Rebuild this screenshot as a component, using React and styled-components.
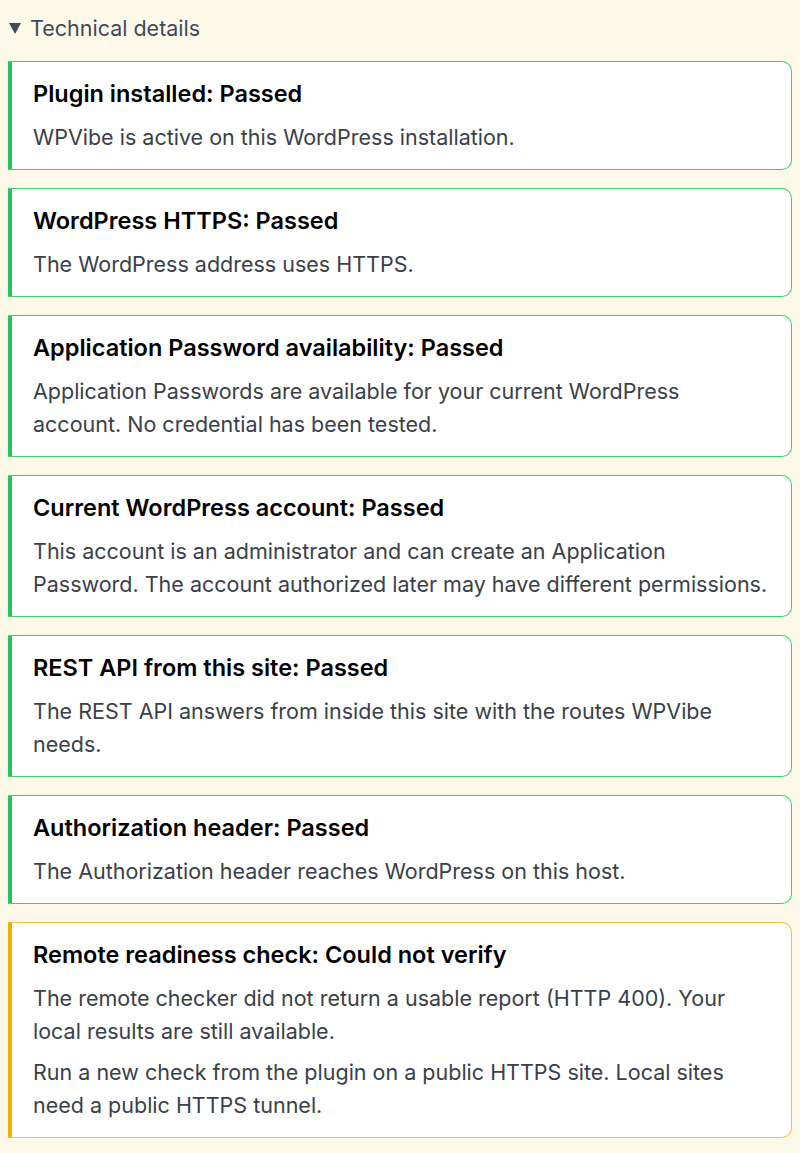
import React from "react";
import styled, { createGlobalStyle } from "styled-components";

const Global = createGlobalStyle`
  html, body { background: #fdf9e9; }
  body {
    margin: 8px;
    font-family: Inter, "Noto Sans", "Liberation Sans", sans-serif;
    -webkit-font-smoothing: antialiased;
  }
`;

const Details = styled.details`
  margin: 0;
`;

const Summary = styled.summary`
  list-style: none;
  cursor: pointer;
  display: flex;
  align-items: center;
  gap: 9px;
  font-size: 21.5px;
  line-height: 38px;
  color: #3f4a5c;
  margin-top: 1px;
  margin-bottom: 14px;
  &::-webkit-details-marker { display: none; }
`;

const Caret = styled.span`
  display: inline-block;
  width: 0;
  height: 0;
  margin-left: 1px;
  border-left: 6px solid transparent;
  border-right: 6px solid transparent;
  border-top: 11px solid #3f4a5c;
`;

const List = styled.div`
  display: flex;
  flex-direction: column;
  gap: 18px;
`;

const colors = {
  pass: "#3bcf6a",
  passStrong: "#22c55e",
  warn: "#f2be3d",
  warnStrong: "#f0b000",
};

const Card = styled.section`
  background: #fff;
  border: 1.5px solid ${(p) => (p.$tone === "warn" ? colors.warn : colors.pass)};
  border-left: 4px solid ${(p) => (p.$tone === "warn" ? colors.warnStrong : colors.passStrong)};
  border-radius: 0 10px 10px 0;
  padding: 15px 18px 15px 21px;
`;

const Title = styled.h3`
  margin: 0 0 10px;
  font-size: 23.5px;
  line-height: 34px;
  font-weight: 600;
  color: #000;
`;

const Text = styled.p`
  margin: 0;
  font-size: 21.5px;
  line-height: 33px;
  color: #3a4049;
  & + & { margin-top: 8px; }
`;

const checks = [
  { tone: "pass", title: "Plugin installed: Passed", text: ["WPVibe is active on this WordPress installation."] },
  { tone: "pass", title: "WordPress HTTPS: Passed", text: ["The WordPress address uses HTTPS."] },
  {
    tone: "pass",
    title: "Application Password availability: Passed",
    text: ["Application Passwords are available for your current WordPress account. No credential has been tested."],
  },
  {
    tone: "pass",
    title: "Current WordPress account: Passed",
    text: ["This account is an administrator and can create an Application Password. The account authorized later may have different permissions."],
  },
  {
    tone: "pass",
    title: "REST API from this site: Passed",
    text: ["The REST API answers from inside this site with the routes WPVibe needs."],
  },
  {
    tone: "pass",
    title: "Authorization header: Passed",
    text: ["The Authorization header reaches WordPress on this host."],
  },
  {
    tone: "warn",
    title: "Remote readiness check: Could not verify",
    text: [
      "The remote checker did not return a usable report (HTTP 400). Your local results are still available.",
      "Run a new check from the plugin on a public HTTPS site. Local sites need a public HTTPS tunnel.",
    ],
  },
];

export default function App() {
  return (
    <>
      <Global />
      <Details open>
        <Summary>
          <Caret />
          Technical details
        </Summary>
        <List>
          {checks.map((c) => (
            <Card key={c.title} $tone={c.tone}>
              <Title>{c.title}</Title>
              {c.text.map((t) => (
                <Text key={t}>{t}</Text>
              ))}
            </Card>
          ))}
        </List>
      </Details>
    </>
  );
}
